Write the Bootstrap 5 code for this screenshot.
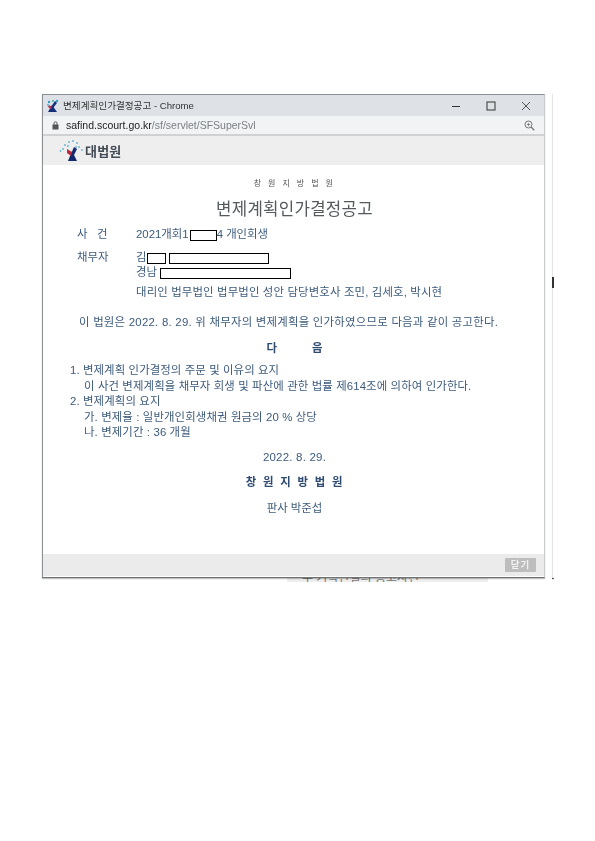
<!DOCTYPE html>
<html lang="ko">
<head>
<meta charset="utf-8">
<title>변제계획인가결정공고</title>
<link href="https://cdn.jsdelivr.net/npm/bootstrap@5.3.0/dist/css/bootstrap.min.css" rel="stylesheet">
<style>
html,body{background:#fff;height:841px;overflow:hidden}
body{font-family:"Liberation Sans","Noto Sans CJK KR",sans-serif;color:#3d5b7c;font-size:11.4px;line-height:1}
.sheet{padding:94px 0 0 42px;width:595px;position:relative}
.win{width:503px;height:484px;border:1px solid #8b8f91;border-right-color:#c9cccd;border-bottom-color:#6f7375;box-shadow:0 1px 1px rgba(0,0,0,.25);background:#fff;filter:blur(.3px)}
.tbar{height:21px;background:#dee1e6;color:#333;font-size:9.6px;padding-left:3px;flex:none}
.tbar .ttl{margin-left:4px}
.winbtns{gap:25px;padding-right:13px}
.abar{height:20px;flex:none;background:#f1f3f4;border-bottom:2px solid #cfd1d2;padding-left:9px;padding-right:9px;color:#7b7f84;font-size:10.5px}
.abar .dom{color:#222}
.abar .url{margin-left:7px}
.hbar{height:29px;flex:none;background:#eeeeee;padding-left:16px}
.hbar .nm{font-family:"Noto Sans CJK KR",sans-serif;font-weight:700;color:#444b55;font-size:13px;margin-left:2px;letter-spacing:.2px}
.docu{height:389px;flex:none;padding-top:12px;background:#fff}
.ln{white-space:nowrap;display:flex;align-items:center}
.ctr{justify-content:center}
.l1{height:14px;font-size:8px;letter-spacing:2.4px;color:#555;padding-left:2px}
.l2{height:26px;margin-top:4px;font-size:16.8px;letter-spacing:.25px;color:#555a5e;font-family:"Noto Sans CJK KR",sans-serif;font-weight:400;padding-left:2px}
.l3{height:16px;margin-top:6px;padding-left:34px}
.lbl{width:59px;flex:none}
.l4{height:16px;margin-top:7px;padding-left:34px}
.l5{height:14px;padding-left:93px}
.l6{height:16px;margin-top:5px;padding-left:93px;letter-spacing:.15px}
.l7{height:16px;margin-top:14px;padding-left:36px;letter-spacing:.25px}
.l8{height:16px;margin-top:10px;font-weight:700;word-spacing:32px;color:#2f4a70;padding-left:2px}
.l9{height:16px;margin-top:5.500px;padding-left:27px;letter-spacing:.1px}
.lA{padding-left:41px;height:15.500px;letter-spacing:.12px}
.lB{height:16px;margin-top:9.500px;font-size:11.500px;letter-spacing:.2px;padding-left:2px}
.lC{height:16px;margin-top:9px;font-weight:700;letter-spacing:1.8px;color:#2f4a70;padding-left:3px}
.lD{height:16px;margin-top:10px;padding-left:2px}
.hide{display:inline-block;height:11px;border:1px solid #000;background:#fff;flex:none}
.fbar{height:22px;flex:none;background:#ebebeb;padding-right:8px}
.shut{width:31px;height:14px;background:#bdbdbd;color:#f2f2f2;font-size:9.5px;font-weight:700;border:0;border-radius:1px;padding:0;letter-spacing:1px;line-height:14px}
.under{margin-left:245px;width:201px;height:4px;overflow:hidden;background:#eee;color:#777;font-size:12px;line-height:1}
.under span{display:block;margin:-6px 0 0 15px}
.edge{position:absolute;left:552px;top:94px;width:1px;height:486px;background:#e4e4e4}
.tick{position:absolute;left:552px;top:277px;width:2px;height:11px;background:#333}
.tick2{position:absolute;left:552px;top:578px;width:2px;height:1px;background:#444}
</style>
</head>
<body>
<div class="sheet">
  <div class="win d-flex flex-column">
    <div class="tbar d-flex align-items-center justify-content-between">
      <div class="d-flex align-items-center">
        <svg width="13" height="14" viewBox="0 0 13 14"><path d="M2 13 L6 6 L11 13Z" fill="#14307a"/><path d="M5 8 L9 2 L11 4 L7 9Z" fill="#14307a"/><path d="M3 6 L6 8 L5 10 L2 8Z" fill="#c22a4a"/><circle cx="3" cy="3" r="1.2" fill="#2a9fc4"/><circle cx="7" cy="2" r="1" fill="#3bb0a8"/><circle cx="11" cy="2" r="1.2" fill="#2a9fc4"/><circle cx="2" cy="6" r="1" fill="#5bb0c9"/></svg>
        <span class="ttl">변제계획인가결정공고 - Chrome</span>
      </div>
      <div class="winbtns d-flex align-items-center">
        <svg width="10" height="10" viewBox="0 0 10 10"><path d="M1 5.500H9" stroke="#333" stroke-width="1"/></svg>
        <svg width="10" height="10" viewBox="0 0 10 10"><rect x="1" y="1" width="8" height="8" fill="none" stroke="#333" stroke-width="1"/></svg>
        <svg width="10" height="10" viewBox="0 0 10 10"><path d="M1 1L9 9M9 1L1 9" stroke="#444" stroke-width=".9"/></svg>
      </div>
    </div>
    <div class="abar d-flex align-items-center justify-content-between">
      <div class="d-flex align-items-center">
        <svg width="7" height="9" viewBox="0 0 7 9"><rect x=".5" y="3.5" width="6" height="5" fill="#555"/><path d="M2 4V2.3a1.5 1.5 0 013 0V4" fill="none" stroke="#555"/></svg>
        <span class="url"><span class="dom">safind.scourt.go.kr</span>/sf/servlet/SFSuperSvl</span>
      </div>
      <svg width="11" height="11" viewBox="0 0 11 11"><circle cx="4.500" cy="4.500" r="3.500" fill="none" stroke="#777"/><path d="M7 7L10.3 10.3" stroke="#777" stroke-width="1.3"/><path d="M2.800 4.500H6.200M4.500 2.800V6.200" stroke="#777" stroke-width=".8"/></svg>
    </div>
    <div class="hbar d-flex align-items-center">
      <svg width="24" height="23" viewBox="0 0 24 23"><path d="M9 22 L13 12 L18 22Z" fill="#12286e"/><path d="M12 15 L15 8 L18 10 L15 16Z" fill="#12286e"/><path d="M8 10 L13 13 L12 17 L8 14Z" fill="#b8283f"/><g fill="#6db6cf"><circle cx="4" cy="10" r="1"/><circle cx="6" cy="6" r="1"/><circle cx="10" cy="3" r="1"/><circle cx="14" cy="2" r="1"/><circle cx="18" cy="4" r="1"/><circle cx="20" cy="8" r="1"/><circle cx="23" cy="11" r=".9"/><circle cx="1.500" cy="12" r=".9"/><circle cx="9" cy="7" r="1"/><circle cx="17" cy="8" r="1"/></g></svg>
      <span class="nm">대법원</span>
    </div>
    <div class="docu">
      <div class="ln ctr l1">창 원 지 방 법 원</div>
      <div class="ln ctr l2">변제계획인가결정공고</div>
      <div class="ln l3"><span class="lbl">사 &nbsp;&nbsp;건</span><span>2021개회1</span><span class="hide" style="width:27px;margin-left:1px"></span><span>4 개인회생</span></div>
      <div class="ln l4"><span class="lbl">채무자</span><span>김</span><span class="hide" style="width:19px;margin-left:1px"></span><span class="hide" style="width:100px;margin-left:3px"></span></div>
      <div class="ln l5"><span>경남</span><span class="hide" style="width:131px;margin-left:3px"></span></div>
      <div class="ln l6">대리인 법무법인 법무법인 성안 담당변호사 조민, 김세호, 박시현</div>
      <div class="ln l7">이 법원은 2022. 8. 29. 위 채무자의 변제계획을 인가하였으므로 다음과 같이 공고한다.</div>
      <div class="ln ctr l8">다 음</div>
      <div class="ln l9">1. 변제계획 인가결정의 주문 및 이유의 요지</div>
      <div class="ln lA">이 사건 변제계획을 채무자 회생 및 파산에 관한 법률 제614조에 의하여 인가한다.</div>
      <div class="ln lA" style="padding-left:27px">2. 변제계획의 요지</div>
      <div class="ln lA">가. 변제율 : 일반개인회생채권 원금의 20 % 상당</div>
      <div class="ln lA">나. 변제기간 : 36 개월</div>
      <div class="ln ctr lB">2022. 8. 29.</div>
      <div class="ln ctr lC">창 원 지 방 법 원</div>
      <div class="ln ctr lD">판사 박준섭</div>
    </div>
    <div class="fbar d-flex align-items-center justify-content-end"><button class="shut" type="button">닫기</button></div>
  </div>
  <div class="under"><span>주 기각판결의 공고사건</span></div>
  <div class="edge"></div><div class="tick"></div><div class="tick2"></div>
</div>
</body>
</html>
